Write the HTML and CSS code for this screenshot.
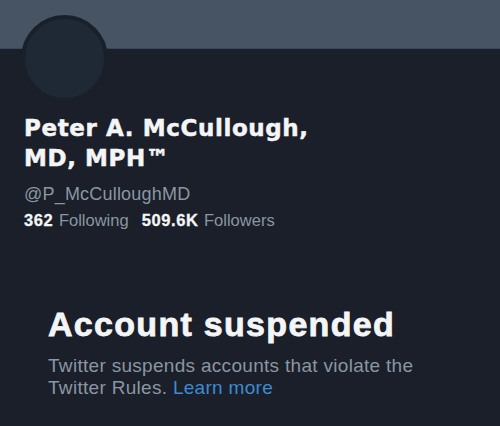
FILE: index.html
```html
<!DOCTYPE html>
<html>
<head>
<meta charset="utf-8">
<link rel="stylesheet" href="styles.css">
</head>
<body>
<div class="page">
  <div class="banner"></div>
  <div class="profile">
    <div class="avatar-row">
      <div class="avatar"></div>
    </div>
    <h1 class="name">Peter A. McCullough,<br>MD, MPH™</h1>
    <div class="handle">@P_McCulloughMD</div>
    <div class="stats">
      <span class="stat"><b>362</b> Following</span>
      <span class="stat"><b>509.6K</b> Followers</span>
    </div>
  </div>
  <div class="suspended">
    <h2 class="title">Account suspended</h2>
    <p class="desc">Twitter suspends accounts that violate the<br>Twitter Rules. <span class="link">Learn more</span></p>
  </div>
</div>
</body>
</html>
```
FILE: styles.css
```css
html, body {
  margin: 0;
  padding: 0;
  background: #1a1f29;
}
.page {
  width: 500px;
  height: 426px;
  background: #1a1f29;
  font-family: "Liberation Sans", Arial, sans-serif;
  color: #f4f5f6;
  overflow: hidden;
}
.banner {
  height: 48px;
  background: #465464;
  border-bottom: 1px solid #3b4654;
}
.profile {
  padding: 0 24px;
}
.avatar-row {
  height: 65px;
  position: relative;
}
.avatar {
  position: absolute;
  left: -3px;
  top: -34px;
  width: 79px;
  height: 79px;
  border-radius: 50%;
  background: #1e2935;
  border: 4px solid #19202a;
}
.name {
  margin: 0;
  font-family: "DejaVu Sans", "Liberation Sans", sans-serif;
  font-size: 23px;
  line-height: 29.5px;
  font-weight: 700;
  letter-spacing: 0.6px;
  -webkit-text-stroke: 0.5px #f4f5f6;
}
.handle {
  margin-top: 11px;
  font-size: 18px;
  line-height: 20px;
  letter-spacing: 0.2px;
  color: #8a96a3;
}
.stats {
  margin-top: 6px;
  display: flex;
  gap: 13px;
  font-size: 16.5px;
  line-height: 20px;
  color: #8a96a3;
}
.stat b {
  color: #f4f5f6;
  letter-spacing: 0.6px;
  margin-right: 1px;
  -webkit-text-stroke: 0.3px #f4f5f6;
}
.suspended {
  padding: 0 40px 0 48px;
  margin-top: 74px;
}
.title {
  margin: 0;
  font-size: 34px;
  line-height: 40px;
  font-weight: 700;
  letter-spacing: 1.3px;
  -webkit-text-stroke: 0.8px #f4f5f6;
}
.desc {
  margin: 11px 0 0;
  font-size: 19px;
  line-height: 22.3px;
  letter-spacing: 0.3px;
  color: #8a96a3;
}
.link {
  color: #3d8bd2;
}
```
